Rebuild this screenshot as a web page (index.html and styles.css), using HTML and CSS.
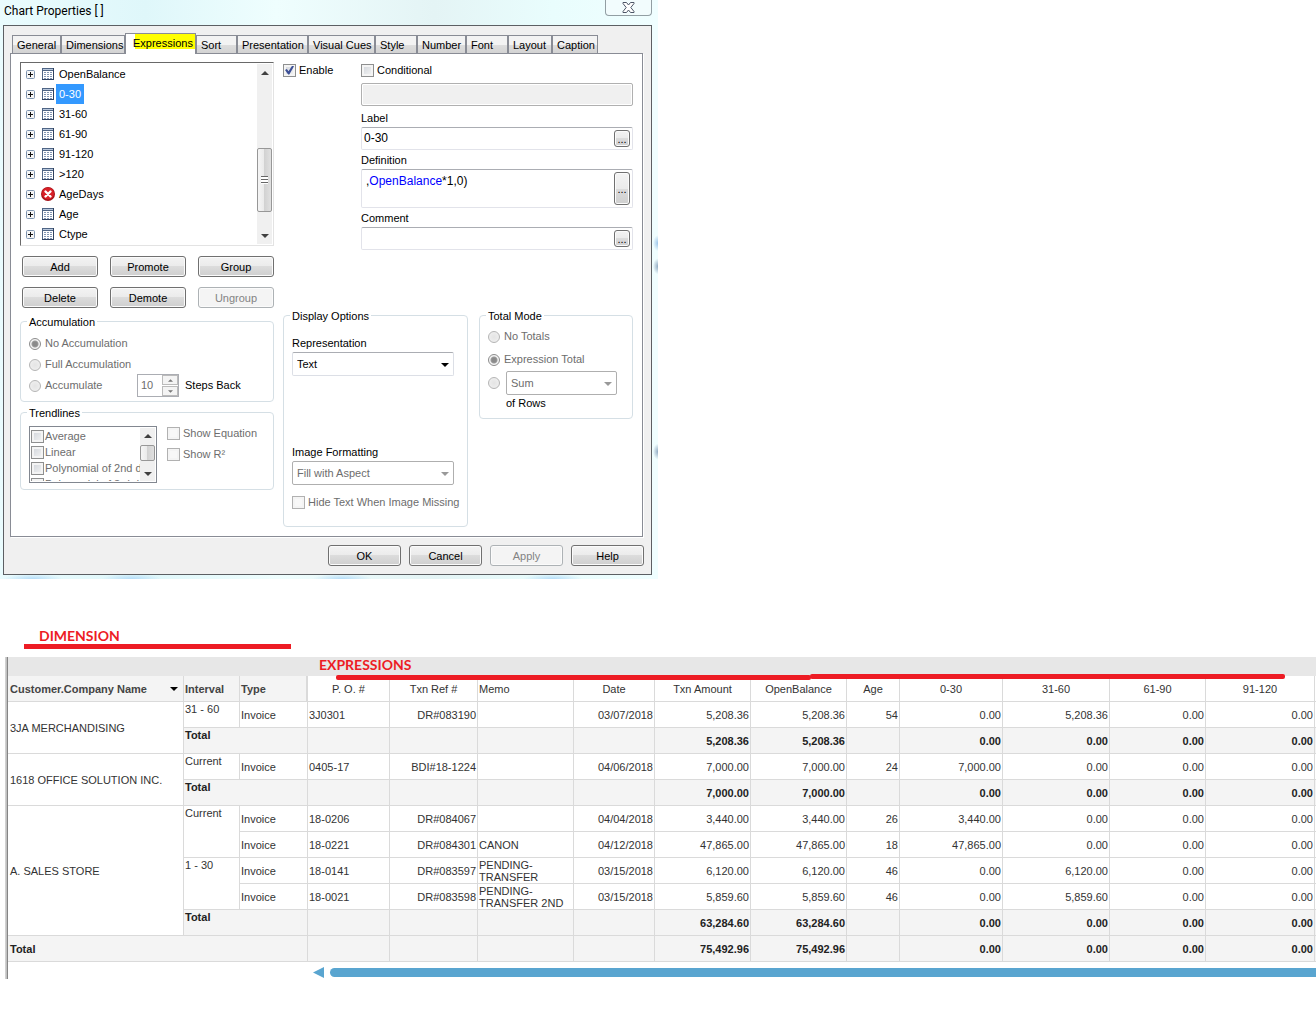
FILE: index.html
```html
<!DOCTYPE html>
<html lang="en">
<head>
<meta charset="utf-8">
<title>Chart Properties</title>
<link rel="stylesheet" href="styles.css">
</head>
<body>
<svg class="symbols" aria-hidden="true">
  <symbol id="plus" viewBox="0 0 9 9">
    <rect x=".5" y=".5" width="8" height="8" rx="1" fill="#f4f4f4" stroke="#7f95b0"/>
    <path d="M2 4.500h5M4.500 2v5" stroke="#111" fill="none"/>
  </symbol>
  <symbol id="sheet" viewBox="0 0 12 12">
    <rect width="12" height="12" fill="#4f6585"/>
    <rect x="1" y="1" width="10" height="1" fill="#b9c8dd"/>
    <rect x="1" y="3" width="10" height="8" fill="#fff"/>
    <path d="M2 4.500h2M5 4.500h2M8 4.500h2M2 6.500h2M5 6.500h2M8 6.500h2M2 8.500h2M5 8.500h2M8 8.500h2M2 10.500h2M5 10.500h2M8 10.500h2" stroke="#8296b3"/>
    <path d="M0 11.500h12M11.500 0v12" stroke="#2f4260"/>
  </symbol>
  <symbol id="error" viewBox="0 0 14 14">
    <circle cx="7" cy="7" r="7" fill="#a51017"/>
    <circle cx="7" cy="6.500" r="6" fill="#d81f26"/>
    <path d="M4.500 4.500l5 5M9.500 4.500l-5 5" stroke="#fff" stroke-width="2.400" stroke-linecap="round"/>
  </symbol>
  <symbol id="up" viewBox="0 0 8 4"><path d="M0 4L4 0l4 4z"/></symbol>
  <symbol id="down" viewBox="0 0 8 4"><path d="M0 0l4 4 4-4z"/></symbol>
</svg>

<section class="dialog">
  <header class="titlebar">
    <h1>Chart Properties [ ]</h1>
    <button class="close" aria-label="Close">
      <svg width="13" height="11" viewBox="0 0 13 11"><path d="M1 .5h3.500L6.500 3 8.500.5H12v1L8.800 5.500 12 9.500v1H8.500L6.500 8l-2 2.500H1v-1l3.200-4L1 1.500z" fill="#fff" stroke="#4d5566"/></svg>
    </button>
  </header>
  <div class="frame">
    <nav class="tabs" role="tablist">
      <button role="tab">General</button>
      <button role="tab">Dimensions</button>
      <button role="tab" class="active" aria-selected="true">Expressions</button>
      <button role="tab">Sort</button>
      <button role="tab">Presentation</button>
      <button role="tab">Visual Cues</button>
      <button role="tab">Style</button>
      <button role="tab">Number</button>
      <button role="tab">Font</button>
      <button role="tab">Layout</button>
      <button role="tab">Caption</button>
    </nav>

    <div class="panel">
      <div class="left">
        <div class="tree">
          <ul>
            <li><svg class="plus"><use href="#plus"/></svg><svg class="ico"><use href="#sheet"/></svg><span>OpenBalance</span></li>
            <li><svg class="plus"><use href="#plus"/></svg><svg class="ico"><use href="#sheet"/></svg><span class="selected">0-30</span></li>
            <li><svg class="plus"><use href="#plus"/></svg><svg class="ico"><use href="#sheet"/></svg><span>31-60</span></li>
            <li><svg class="plus"><use href="#plus"/></svg><svg class="ico"><use href="#sheet"/></svg><span>61-90</span></li>
            <li><svg class="plus"><use href="#plus"/></svg><svg class="ico"><use href="#sheet"/></svg><span>91-120</span></li>
            <li><svg class="plus"><use href="#plus"/></svg><svg class="ico"><use href="#sheet"/></svg><span>&gt;120</span></li>
            <li><svg class="plus"><use href="#plus"/></svg><svg class="ico error"><use href="#error"/></svg><span>AgeDays</span></li>
            <li><svg class="plus"><use href="#plus"/></svg><svg class="ico"><use href="#sheet"/></svg><span>Age</span></li>
            <li><svg class="plus"><use href="#plus"/></svg><svg class="ico"><use href="#sheet"/></svg><span>Ctype</span></li>
          </ul>
          <div class="scroll tall">
            <svg class="arrow"><use href="#up"/></svg>
            <div class="thumb"><i></i></div>
            <svg class="arrow"><use href="#down"/></svg>
          </div>
        </div>

        <div class="actions">
          <button class="btn">Add</button>
          <button class="btn">Promote</button>
          <button class="btn">Group</button>
          <button class="btn">Delete</button>
          <button class="btn">Demote</button>
          <button class="btn" disabled>Ungroup</button>
        </div>

        <fieldset class="accumulation">
          <legend>Accumulation</legend>
          <label class="choice"><input type="radio" name="acc" checked disabled>No Accumulation</label>
          <label class="choice"><input type="radio" name="acc" disabled>Full Accumulation</label>
          <div class="steps">
            <label class="choice"><input type="radio" name="acc" disabled>Accumulate</label>
            <div class="spinner">
              <input type="text" id="steps" value="10" disabled>
              <div>
                <button disabled aria-label="More"><svg><use href="#up"/></svg></button>
                <button disabled aria-label="Fewer"><svg><use href="#down"/></svg></button>
              </div>
            </div>
            <label for="steps">Steps Back</label>
          </div>
        </fieldset>

        <fieldset class="trendlines">
          <legend>Trendlines</legend>
          <div class="lines">
            <div class="options">
              <label class="choice"><input type="checkbox" disabled>Average</label>
              <label class="choice"><input type="checkbox" disabled>Linear</label>
              <label class="choice"><input type="checkbox" disabled>Polynomial of 2nd d</label>
              <label class="choice"><input type="checkbox" disabled>Polynomial of 3rd d</label>
            </div>
            <div class="scroll short">
              <svg class="arrow"><use href="#up"/></svg>
              <div class="thumb"></div>
              <svg class="arrow"><use href="#down"/></svg>
            </div>
          </div>
          <div class="shows">
            <label class="choice"><input type="checkbox" disabled>Show Equation</label>
            <label class="choice"><input type="checkbox" disabled>Show R²</label>
          </div>
        </fieldset>
      </div>

      <div class="right">
        <div class="expression">
          <label class="choice"><input type="checkbox" checked>Enable</label>
          <div class="fields">
            <label class="choice"><input type="checkbox">Conditional</label>
            <input class="condition" type="text" aria-label="Condition" disabled>
            <label class="caption" for="label">Label</label>
            <div class="field"><input id="label" type="text" value="0-30"><button class="btn more">...</button></div>
            <span class="caption" id="definition">Definition</span>
            <div class="field big"><div class="code" role="textbox" aria-labelledby="definition" contenteditable="true">,<b>OpenBalance</b>*1,0)</div><button class="btn more">...</button></div>
            <label class="caption" for="comment">Comment</label>
            <div class="field"><input id="comment" type="text"><button class="btn more">...</button></div>
          </div>
        </div>

        <div class="groups">
          <fieldset class="display">
            <legend>Display Options</legend>
            <label for="rep">Representation</label>
            <div class="select"><select id="rep"><option>Text</option></select></div>
            <label class="second" for="fmt">Image Formatting</label>
            <div class="select"><select id="fmt" disabled><option>Fill with Aspect</option></select></div>
            <label class="choice"><input type="checkbox" disabled>Hide Text When Image Missing</label>
          </fieldset>
          <fieldset class="total">
            <legend>Total Mode</legend>
            <label class="choice"><input type="radio" name="total" disabled>No Totals</label>
            <label class="choice"><input type="radio" name="total" checked disabled>Expression Total</label>
            <div class="rows">
              <input type="radio" name="total" aria-label="Aggregate of rows" disabled>
              <div class="select"><select id="agg" disabled><option>Sum</option></select></div>
            </div>
            <label class="of" for="agg">of Rows</label>
          </fieldset>
        </div>
      </div>
    </div>

    <footer class="footer">
      <button class="btn">OK</button>
      <button class="btn">Cancel</button>
      <button class="btn" disabled>Apply</button>
      <button class="btn">Help</button>
    </footer>
  </div>
</section>

<section class="report">
  <h2 class="note dimension">DIMENSION</h2>
  <div class="grid">
    <div class="band"><h2 class="note">EXPRESSIONS</h2></div>
    <div class="stroke first"></div>
    <div class="stroke last"></div>
    <table>
      <colgroup>
        <col class="c176"><col class="c56"><col class="c68"><col class="c82"><col class="c88"><col class="c96"><col class="c81"><col class="c96"><col class="c96"><col class="c53"><col class="c103"><col class="c107"><col class="c96"><col class="c109"><col>
      </colgroup>
      <thead>
        <tr><th class="dim"><div class="sort">Customer.Company Name<svg><use href="#down"/></svg></div></th><th class="dim">Interval</th><th class="dim edge">Type</th><th>P. O. #</th><th>Txn Ref #</th><th class="l">Memo</th><th>Date</th><th>Txn Amount</th><th>OpenBalance</th><th>Age</th><th>0-30</th><th>31-60</th><th>61-90</th><th>91-120</th><th></th></tr>
      </thead>
      <tbody>
        <tr><td class="l name" rowspan="2">3JA MERCHANDISING</td><td class="top">31 - 60</td><td class="l">Invoice</td><td class="l">3J0301</td><td>DR#083190</td><td></td><td>03/07/2018</td><td>5,208.36</td><td>5,208.36</td><td>54</td><td>0.00</td><td>5,208.36</td><td>0.00</td><td>0.00</td><td></td></tr>
        <tr class="sum"><td class="top" colspan="2">Total</td><td></td><td></td><td></td><td></td><td>5,208.36</td><td>5,208.36</td><td></td><td>0.00</td><td>0.00</td><td>0.00</td><td>0.00</td><td></td></tr>
        <tr><td class="l name" rowspan="2">1618 OFFICE SOLUTION INC.</td><td class="top">Current</td><td class="l">Invoice</td><td class="l">0405-17</td><td>BDI#18-1224</td><td></td><td>04/06/2018</td><td>7,000.00</td><td>7,000.00</td><td>24</td><td>7,000.00</td><td>0.00</td><td>0.00</td><td>0.00</td><td></td></tr>
        <tr class="sum"><td class="top" colspan="2">Total</td><td></td><td></td><td></td><td></td><td>7,000.00</td><td>7,000.00</td><td></td><td>0.00</td><td>0.00</td><td>0.00</td><td>0.00</td><td></td></tr>
        <tr><td class="l name" rowspan="5">A. SALES STORE</td><td class="top" rowspan="2">Current</td><td class="l">Invoice</td><td class="l">18-0206</td><td>DR#084067</td><td></td><td>04/04/2018</td><td>3,440.00</td><td>3,440.00</td><td>26</td><td>3,440.00</td><td>0.00</td><td>0.00</td><td>0.00</td><td></td></tr>
        <tr><td class="l">Invoice</td><td class="l">18-0221</td><td>DR#084301</td><td class="l">CANON</td><td>04/12/2018</td><td>47,865.00</td><td>47,865.00</td><td>18</td><td>47,865.00</td><td>0.00</td><td>0.00</td><td>0.00</td><td></td></tr>
        <tr><td class="top" rowspan="2">1 - 30</td><td class="l">Invoice</td><td class="l">18-0141</td><td>DR#083597</td><td class="l">PENDING-<br>TRANSFER</td><td>03/15/2018</td><td>6,120.00</td><td>6,120.00</td><td>46</td><td>0.00</td><td>6,120.00</td><td>0.00</td><td>0.00</td><td></td></tr>
        <tr><td class="l">Invoice</td><td class="l">18-0021</td><td>DR#083598</td><td class="l">PENDING-<br>TRANSFER 2ND</td><td>03/15/2018</td><td>5,859.60</td><td>5,859.60</td><td>46</td><td>0.00</td><td>5,859.60</td><td>0.00</td><td>0.00</td><td></td></tr>
        <tr class="sum"><td class="top" colspan="2">Total</td><td></td><td></td><td></td><td></td><td>63,284.60</td><td>63,284.60</td><td></td><td>0.00</td><td>0.00</td><td>0.00</td><td>0.00</td><td></td></tr>
      </tbody>
      <tfoot>
        <tr class="sum"><td class="l name" colspan="3">Total</td><td></td><td></td><td></td><td></td><td>75,492.96</td><td>75,492.96</td><td></td><td>0.00</td><td>0.00</td><td>0.00</td><td>0.00</td><td></td></tr>
      </tfoot>
    </table>
    <div class="hscroll">
      <svg width="11" height="11" viewBox="0 0 11 11"><path d="M0 5.500L11 0v11z" fill="#59a5d0"/></svg>
      <div class="bar"></div>
    </div>
  </div>
</section>
</body>
</html>
```

FILE: styles.css
```css
* { box-sizing: border-box; }

body {
  margin: 0;
  background: #fff;
  color: #000;
  font: 11px/13px "Liberation Sans", Arial, sans-serif;
  overflow-x: hidden;
}

button, input, select { font: inherit; color: inherit; margin: 0; padding: 0; }
ul { list-style: none; margin: 0; padding: 0; }
h1, h2 { margin: 0; }
.symbols { position: absolute; width: 0; height: 0; }

/* Window */
.dialog {
  width: 50%;
  min-width: 658px;
  padding: 0 6px 4px 3px;
  background:
    radial-gradient(ellipse 5px 8px at 100% 42%, #9ac4ea, transparent),
    radial-gradient(ellipse 5px 8px at 100% 46%, #8fa9c2, transparent),
    radial-gradient(ellipse 5px 8px at 100% 78%, #8fa9c2, transparent),
    radial-gradient(ellipse 30px 5px at 5% 100%, #b4dcf8, transparent),
    radial-gradient(ellipse 30px 5px at 20% 100%, #b4dcf8, transparent),
    radial-gradient(ellipse 30px 5px at 52% 100%, #b4dcf8, transparent),
    radial-gradient(ellipse 30px 5px at 84% 100%, #b4dcf8, transparent),
    linear-gradient(90deg, #eafcfe 0%, #dff7fa 22%, #effefe 42%, #e4f4f5 66%, #e9fdfd 84%, #f0feff 100%);
}

.titlebar { display: flex; justify-content: space-between; height: 25px; padding-left: 1px; }
.titlebar h1 { font: 12px/22px Roboto, "Open Sans", sans-serif; }
.close {
  width: 47px;
  height: 16px;
  line-height: 0;
  background: #f2fcfd;
  border: 1px solid #929ea3;
  border-top: 0;
  border-radius: 0 0 4px 4px;
}

.frame { padding: 7px 7px 8px 6px; background: #f0f0f0; border: 1px solid #5c5f63; }

.tabs {
  display: grid;
  grid-template-columns: 49px 64px 71px 41px 71px 67px 42px 49px 42px 44px 46px;
  align-items: end;
  height: 20px;
  padding-left: 2px;
}
.tabs button {
  height: 18px;
  padding: 1px 4px 0;
  text-align: left;
  white-space: nowrap;
  border: 1px solid #898c95;
  border-bottom: 0;
  background: linear-gradient(#f3f3f3 50%, #dedede 50%, #d3d3d3);
}
.tabs .active {
  height: 21px;
  margin-bottom: -1px;
  padding: 0 7px 2px;
  background: linear-gradient(#ff0, #ff0) 9px 0 / 100% 15px no-repeat #fff;
  z-index: 1;
}

.panel {
  display: grid;
  grid-template-columns: 254px 1fr;
  gap: 9px;
  margin-right: 1px;
  padding: 8px 9px 9px;
  background: #fff;
  border: 1px solid #898c95;
  box-shadow: 1px 1px #fff;
}

/* Buttons */
.btn {
  height: 21px;
  padding-top: 1px;
  border: 1px solid #707070;
  border-radius: 3px;
  background: linear-gradient(#f3f3f3, #ebebeb 50%, #dcdcdc 50%, #cfcfcf);
  box-shadow: inset 0 0 0 1px #fbfbfb;
}
.btn:disabled { color: #838383; border-color: #adb2b5; background: #f4f4f4; }

/* Check boxes and radios */
.choice { display: flex; align-items: center; gap: 3px; min-height: 16px; white-space: nowrap; }
.choice:has(:disabled) { color: #6d6d6d; }
input[type="checkbox"] {
  appearance: none;
  flex: none;
  width: 13px;
  height: 13px;
  border: 1px solid #8e8f8f;
  background: linear-gradient(135deg, #cfd3d9, #f6f6f6);
  box-shadow: inset 0 0 0 2px #f4f4f4;
}
input[type="checkbox"]:disabled { border-color: #b1b1b1; background: #f8f8f8; }
input[type="checkbox"]:checked::before {
  content: "";
  display: block;
  width: 9px;
  height: 9px;
  margin: 1px;
  background: #3c4f96;
  clip-path: polygon(0 50%, 20% 40%, 40% 65%, 80% 0, 100% 8%, 48% 100%, 35% 100%);
}
input[type="radio"] {
  appearance: none;
  flex: none;
  width: 12px;
  height: 12px;
  border: 1px solid #b5b5b5;
  border-radius: 50%;
  background: radial-gradient(#e4e4e4, #f2f2f2);
}
input[type="radio"]:checked {
  border-color: #8c8c8c;
  background: radial-gradient(circle, #8a8a8a 0 2px, #9c9c9c 3px, #f4f4f4 4px);
}

fieldset { min-width: 0; margin: 0; padding: 0 8px; border: 1px solid #d5dfe5; border-radius: 4px; }
legend { padding: 1px 2px 0; margin-left: -2px; line-height: 12px; }

/* Expression list */
.tree {
  display: flex;
  justify-content: space-between;
  padding: 1px 1px 1px 5px;
  border: 1px solid #e3e3e3;
  border-top-color: #696969;
  border-left-color: #696969;
}
.tree li { display: flex; align-items: center; height: 20px; line-height: 20px; }
.tree li span { padding: 0 3px; }
.tree .selected { background: #39f; color: #fff; }
.plus { width: 9px; height: 9px; margin-right: 7px; }
.ico { width: 12px; height: 12px; margin-right: 2px; }
.ico.error { width: 14px; height: 14px; margin: 0 1px 0 -1px; }

.scroll { display: flex; flex-direction: column; width: 15px; align-items: center; background: #f0f0f0; }
.arrow { width: 8px; height: 4px; fill: #404040; margin: 7px 0 6px; }
.thumb {
  display: grid;
  place-items: center;
  width: 15px;
  border: 1px solid #979797;
  border-radius: 2px;
  background: linear-gradient(90deg, #f5f5f5, #e9e9e9 50%, #d2d2d2 50%, #e0e0e0);
}
.thumb i { width: 7px; height: 8px; background: repeating-linear-gradient(#666 0 1px, #fff 1px 3px); }
.tall .thumb { height: 64px; margin: 67px 0 auto; }
.short { flex: none; }
.short .arrow { margin: 6px 0 5px; }
.short .thumb { height: 16px; margin: 2px 0 auto; }

.actions { display: grid; grid-template-columns: repeat(3, 76px); justify-content: end; gap: 10px 12px; margin: 10px 0 7px; }

.accumulation { padding-top: 5px; padding-bottom: 5px; margin-bottom: 4px; }
.accumulation .choice { height: 21px; gap: 4px; }
.steps { display: flex; align-items: center; height: 21px; gap: 6px; }
.steps .choice { width: 102px; }
.spinner { display: flex; width: 42px; height: 23px; border: 1px solid #abadb3; background: #fff; }
.spinner input { width: 24px; padding-left: 3px; border: 0; background: none; color: #6d6d6d; }
.spinner div { display: grid; grid-template-rows: 10px 10px; gap: 1px; width: 16px; }
.spinner button { display: grid; place-items: center; border: 1px solid #bbb; background: #f4f4f4; }
.spinner svg { width: 5px; height: 3px; fill: #777; }

.trendlines { display: flex; gap: 10px; padding-top: 7px; padding-bottom: 6px; }
.lines { display: flex; width: 128px; height: 57px; padding: 1px; border: 1px solid #828790; }
.options { flex: 1; min-width: 0; height: 53px; overflow: hidden; }
.options .choice { height: 16px; gap: 1px; }
.options input[type="checkbox"]:disabled { border-color: #8e8f8f; background: linear-gradient(135deg, #cfd3d9, #f6f6f6); }
.shows { margin-top: -3px; }
.shows .choice { height: 21px; }

/* Expression fields */
.expression { display: grid; grid-template-columns: 78px 1fr; align-items: start; }
.fields { display: flex; flex-direction: column; }
.condition { height: 23px; margin: 5px 0 2px; border: 1px solid #b0b0b0; border-radius: 2px; background: #f0f0f0; box-shadow: inset 0 0 0 1px #fff; }
.caption { line-height: 18px; margin-top: 1px; }
.field {
  display: flex;
  height: 23px;
  padding: 2px;
  border: 1px solid #e2e3ea;
  border-top-color: #abadb3;
  border-radius: 2px;
  font-size: 12px;
}
.field input { flex: 1; min-width: 0; height: 15px; border: 0; outline: 0; background: none; }
.field .more { width: 16px; height: 17px; font-size: 11px; line-height: 15px; }
.field.big { height: 39px; }
.field.big .more { height: 33px; }
.code { flex: 1; padding: 1px 0 0 2px; line-height: 16px; }
.code b { font-weight: normal; color: #00f; }

.groups { display: grid; grid-template-columns: 185px 1fr; gap: 11px; align-items: start; margin-top: 59px; }
.display { display: flex; flex-direction: column; padding-top: 13px; padding-bottom: 16px; }
.display > label { line-height: 16px; margin-bottom: 1px; }
.display .select { width: 162px; }
.display .second { margin-top: 68px; }
.display .choice { margin: 9px 0 0; }

.select { position: relative; height: 24px; }
.select::after {
  content: "";
  position: absolute;
  right: 5px;
  top: 11px;
  border: 4px solid transparent;
  border-top-color: #000;
  border-bottom: 0;
}
.select:has(:disabled)::after { border-top-color: #999; }
select {
  appearance: none;
  width: 100%;
  height: 24px;
  padding: 0 4px;
  border: 1px solid #dcdfe6;
  border-top-color: #abadb3;
  border-radius: 2px;
  background: #fff;
}
select:disabled { color: #6d6d6d; opacity: 1; border-color: #afafaf; }

.total { padding-top: 3px; padding-bottom: 7px; }
.total .choice { height: 23px; gap: 4px; }
.rows { display: flex; align-items: center; gap: 6px; }
.rows .select { width: 111px; }
.of { display: block; padding-left: 18px; line-height: 16px; }

.footer { display: flex; justify-content: flex-end; gap: 8px; padding-top: 8px; }
.footer .btn { width: 73px; }

/* Report */
.report { padding-top: 49px; }
.note { color: #ed1c24; font: bold 14px/16px Lato, sans-serif; }
.dimension { width: 267px; margin: 0 0 8px 24px; padding-left: 15px; border-bottom: 5px solid #ed1c24; }
.grid {
  position: relative;
  margin-left: 5px;
  padding-left: 3px;
  background: linear-gradient(90deg, #d8d8d8, #b9b9b9 2px, #858585 2px, #858585 3px, transparent 3px);
  overflow: hidden;
}
.band { height: 19px; padding-left: 311px; background: #e7e7e7; }
.stroke { position: absolute; height: 5px; background: #ed1c24; border-radius: 2px; }
.first { left: 331px; top: 18px; width: 475px; }
.last { left: 805px; top: 17px; width: 475px; }

table { width: 100%; table-layout: fixed; border-collapse: separate; border-spacing: 0; color: #333; }
th, td {
  height: 26px;
  padding: 0 1px;
  line-height: 12px;
  white-space: nowrap;
  border: solid #dadada;
  border-width: 0 1px 1px 0;
}
th { font-weight: normal; text-align: center; }
td { text-align: right; }
th:last-child, td:last-child { padding: 0; border-right: 0; }
.dim { font-weight: bold; text-align: left; color: #444; background: #f4f4f4; }
.edge { border-right-width: 2px; }
.l { text-align: left; }
.name, .dim:first-child { padding-left: 2px; }
.top { text-align: left; vertical-align: top; padding-top: 1px; }
.sum td { font-weight: bold; color: #222; background: #f4f4f4; }
.sort { display: flex; justify-content: space-between; align-items: center; padding-right: 4px; }
.sort svg { width: 8px; height: 4px; fill: #000; }
.c53 { width: 53px; }
.c56 { width: 56px; }
.c68 { width: 68px; }
.c81 { width: 81px; }
.c82 { width: 82px; }
.c88 { width: 88px; }
.c96 { width: 96px; }
.c103 { width: 103px; }
.c107 { width: 107px; }
.c109 { width: 109px; }
.c176 { width: 176px; }

.hscroll { display: flex; align-items: center; gap: 6px; height: 17px; padding: 4px 0 0 305px; }
.bar { flex: 1; height: 9px; margin-right: -5px; border-radius: 5px; background: #59a5d0; }
```
